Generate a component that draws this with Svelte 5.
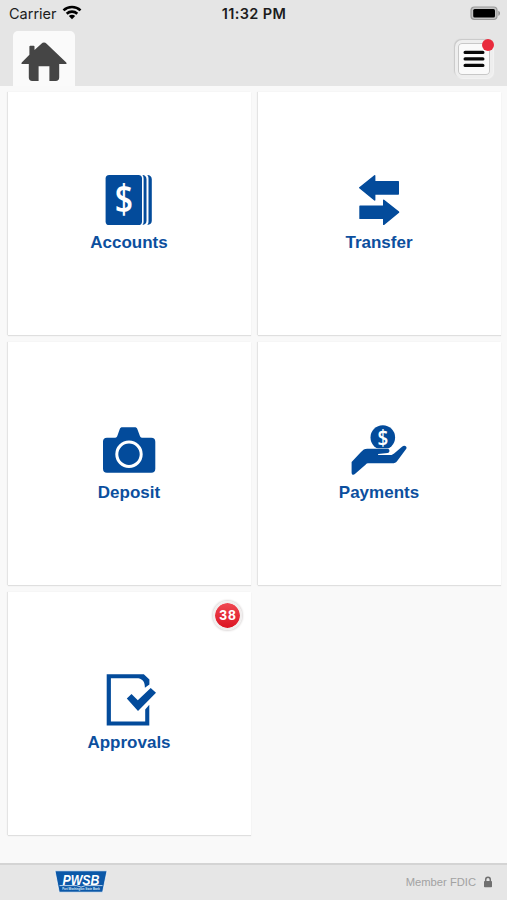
<script>
  const tiles = [
    { id: "accounts", label: "Accounts" },
    { id: "transfer", label: "Transfer" },
    { id: "deposit", label: "Deposit" },
    { id: "payments", label: "Payments" },
    { id: "approvals", label: "Approvals", count: 38 },
  ];
</script>

<div class="screen">
  <header>
    <div class="status">
      <div class="carrier">
        <span>Carrier</span>
        <svg width="20" height="15" viewBox="0 0 20 15">
          <g fill="none" stroke="#000" stroke-width="2.6">
            <path d="M1.5 5.4C6.2.9 13.8.9 18.5 5.4" />
            <path d="M4.7 8.7c3-2.8 7.6-2.8 10.6 0" />
          </g>
          <path d="M10 14.2 6.8 11c1.8-1.7 4.6-1.7 6.4 0z" />
        </svg>
      </div>
      <div class="time">11:32 PM</div>
      <svg class="battery" width="31" height="16" viewBox="0 0 31 16">
        <rect x="1" y="1" width="26" height="12.5" rx="3.4" fill="#c4c4c4" stroke="#9a9a9a" stroke-width="1.2" />
        <rect x="3.2" y="3" width="21.8" height="8.6" rx="1.5" />
        <path d="M28.3 4.7c2.3.9 2.3 4.2 0 5.1z" fill="#929292" />
      </svg>
    </div>
    <div class="nav">
      <button class="home" aria-label="Home">
        <svg width="46" height="40" viewBox="0 0 46 40">
          <path
            d="M23 .5c-1 0-1.8.5-2.6 1.2L13.5 8V4.6c0-.5-.3-.8-.8-.8H9.2c-.5 0-.8.3-.8.8v8.2L1 20.2C0 21.4.2 22 1.6 22h6.2v13.6c0 2.2 1.2 3.4 3.4 3.4h6.4V24.2h10.8V39h6.4c2.2 0 3.4-1.2 3.4-3.4V22h6.2c1.4 0 1.6-.6.6-1.8L25.6 1.7C24.8 1 24 .5 23 .5z"
            fill="#454545"
          />
        </svg>
      </button>
      <button class="menu" aria-label="Menu">
        <svg width="22" height="20" viewBox="0 0 22 20">
          <path d="M2.2 3.4h17.6M2.2 9.9h17.6M2.2 16.4h17.6" stroke="#080808" stroke-width="3.4" stroke-linecap="round" />
        </svg>
        <span class="dot"></span>
      </button>
    </div>
  </header>

  <main>
    {#each tiles as tile (tile.id)}
      <div class="tile">
        <svg class="icon" width="63" height="56" viewBox="0 0 63 56" fill="#034b9b">
          {#if tile.id === "accounts"}
            <rect x="7.6" y="2" width="36.4" height="50" rx="3.6" />
            <path d="M44.4 2c2.6.2 4.1 1.6 4.1 4.2v41.6c0 2.6-1.5 4-4.1 4.2.8-.9 1.2-2 1.2-3.4V5.4c0-1.4-.4-2.5-1.2-3.4z" />
            <path d="M49.2 2c2.9.2 4.6 1.6 4.6 4.2v41.6c0 2.6-1.7 4-4.6 4.2.9-.9 1.3-2 1.3-3.4V5.4c0-1.4-.4-2.5-1.3-3.4z" />
            <text transform="translate(26 40.3) scale(.82 1)" class="dollar">$</text>
          {:else if tile.id === "transfer"}
            <g stroke="#034b9b" stroke-width="1.4" stroke-linejoin="round">
              <path d="M11.7 14.8 26.7 2.8v5.9h23.6V21H26.7v6z" />
              <path d="M50.6 39.1 35.7 27.2v6H12v12.2h23.7v6z" />
            </g>
          {:else if tile.id === "deposit"}
            <path
              d="M9 14.7h8.3c1 0 1.5-.5 1.9-1.4l2.5-7c.5-1.4 1.3-2 2.8-2h12c1.6 0 2.4.6 2.9 2l2.6 7c.4.9.9 1.4 1.9 1.4h9.4c2.6 0 4 1.4 4 4v27c0 2.6-1.4 4-4 4H9c-2.6 0-4-1.4-4-4v-27c0-2.6 1.4-4 4-4z"
            />
            <circle cx="31" cy="31.3" r="12.2" fill="none" stroke="#fff" stroke-width="3" />
          {:else if tile.id === "payments"}
            <circle cx="34.8" cy="14.5" r="12.3" />
            <text transform="translate(35 21.8) scale(.9 1)" class="coin">$</text>
            <path
              d="M3.6 39 13 29.1c2-2.1 3.4-3.3 6.3-3.3h20c2.7 0 3 3.8.2 4.3l-9.4.8v1h12.4c1.6 0 2.4-.6 3.6-1.5l8.2-7c2.2-1.8 5.3.1 4 2.4-.4.7-1 1.5-1.7 2.3L49.2 38c-1.6 1.9-2.5 2.3-5 2.3H20.6c-1.3 0-1.9.3-2.8 1.1L6.9 51c-1.5 1.4-3.3.7-3.3-1.3z"
              stroke="#fff"
              stroke-width="1.2"
              paint-order="stroke"
            />
          {:else}
            <path d="M8.7 1.3h37.1l5.6 5.3v4.9l-4.5 3.3c0-6-1.9-8-6.4-9.5H12.9v43.3h34.3V36.6l4.1-4.8v20.8H8.7z" />
            <path d="m28.8 25.4 4.7-4.4 6.3 6.2L52.7 15l5.3 4.7L40 38z" />
          {/if}
        </svg>
        <span class="label">{tile.label}</span>
        {#if tile.count}
          <span class="badge">{tile.count}</span>
        {/if}
      </div>
    {/each}
  </main>

  <footer>
    <svg class="logo" width="54" height="26" viewBox="0 0 54 26">
      <path d="M1 1.8h52l-4.4 21.4H5.2z" fill="#0b58a8" stroke="#fff" stroke-width=".7" />
      <text x="27" y="15.6" class="logo-name" textLength="37" lengthAdjust="spacingAndGlyphs">PWSB</text>
      <path d="M5.5 16.6h17l4.5 1.5 4.5-1.5h17" fill="none" stroke="#e9f1fa" stroke-width=".8" />
      <text x="27" y="21.3" class="logo-sub">Port Washington State Bank</text>
    </svg>
    <div class="fdic">
      <span>Member FDIC</span>
      <svg width="10" height="12" viewBox="0 0 10 12">
        <path d="M2.7 6V3.7c0-3.3 4.6-3.3 4.6 0V6" fill="none" stroke="#707070" stroke-width="1.5" />
        <rect x="1" y="5" width="8" height="6.2" rx=".8" fill="#707070" />
      </svg>
    </div>
  </footer>
</div>

<style>
  :global(body) {
    margin: 0;
  }
  .screen {
    display: flex;
    flex-direction: column;
    width: 507px;
    height: 900px;
    overflow: hidden;
    background: #f9f9f9;
    font-family: "Liberation Sans", Arial, sans-serif;
  }
  header {
    height: 86px;
    flex: none;
    background: #e5e5e5;
  }
  .status {
    display: grid;
    grid-template-columns: 1fr auto 1fr;
    align-items: center;
    height: 27px;
    padding: 0 6px 0 9px;
    font-family: Inter, sans-serif;
    font-size: 14.5px;
    color: #1c1c1c;
  }
  .carrier {
    display: flex;
    align-items: center;
    gap: 5px;
  }
  .carrier svg {
    margin-top: -2px;
  }
  .time {
    margin-right: 2px;
    font-size: 14.5px;
    font-weight: 600;
    letter-spacing: 0.35px;
  }
  .battery {
    justify-self: end;
  }
  .nav {
    display: flex;
    justify-content: space-between;
    padding: 4px 14px 0 13px;
  }
  button {
    border: 0;
    padding: 0;
    font: inherit;
  }
  .home {
    display: flex;
    justify-content: center;
    width: 62px;
    height: 55px;
    padding-top: 11px;
    box-sizing: border-box;
    border-radius: 5px 5px 0 0;
    background: #fafafa;
  }
  .menu {
    position: relative;
    display: flex;
    align-items: center;
    justify-content: center;
    width: 38px;
    height: 38px;
    margin-top: 9px;
    box-sizing: border-box;
    border: 3px solid #eee;
    border-radius: 7px;
    background: #fafafa;
    box-shadow:
      inset 0 0 0 1px #c8c8c8,
      -1px -1px 1px #c8c8c8,
      1px 1px 1px #f3f3f3;
  }
  .dot {
    position: absolute;
    top: -4px;
    right: -4px;
    width: 12px;
    height: 12px;
    border-radius: 50%;
    background: #e92b3d;
  }
  main {
    display: grid;
    grid-template-columns: 243px 243px;
    grid-auto-rows: 243px;
    gap: 7px;
    flex: 1;
    padding: 6px 0 0 8px;
  }
  .tile {
    position: relative;
    display: flex;
    flex-direction: column;
    align-items: center;
    padding: 81px 1px 0 0;
    box-sizing: border-box;
    background: #fff;
    box-shadow:
      -1px 0 1px #e4e4e4,
      0 1px 1px #dedede;
  }
  .icon {
    display: block;
    flex: none;
  }
  .label {
    margin-top: 4px;
    font-size: 17px;
    font-weight: bold;
    line-height: 20px;
    color: #0c4f9e;
  }
  .dollar,
  .coin {
    font-family: "Open Sans", sans-serif;
    font-weight: 600;
    font-size: 39px;
    text-anchor: middle;
    fill: #fff;
  }
  .coin {
    font-size: 21px;
  }
  .badge {
    position: absolute;
    top: 9px;
    right: 9px;
    width: 25px;
    height: 25px;
    border: 2px solid #f1eeee;
    border-radius: 50%;
    background: linear-gradient(#ef4852, #dc1422) padding-box;
    box-shadow: 0 0 2px 1px #dedada;
    color: #fff;
    font-size: 14px;
    font-weight: bold;
    letter-spacing: 0.8px;
    line-height: 25px;
    text-align: center;
    text-indent: 0.8px;
  }
  footer {
    display: flex;
    align-items: center;
    justify-content: space-between;
    height: 37px;
    flex: none;
    box-sizing: border-box;
    padding: 0 14px 1px 54px;
    border-top: 2px solid #d4d4d4;
    background: #e6e6e6;
  }
  .logo-name {
    font-size: 15px;
    font-weight: bold;
    font-style: italic;
    text-anchor: middle;
    fill: #fff;
  }
  .logo-sub {
    font-size: 2.8px;
    font-weight: bold;
    text-anchor: middle;
    fill: #dbe8f5;
  }
  .fdic {
    display: flex;
    align-items: center;
    gap: 7px;
    font-size: 11.2px;
    color: #a2a2a2;
  }
</style>
